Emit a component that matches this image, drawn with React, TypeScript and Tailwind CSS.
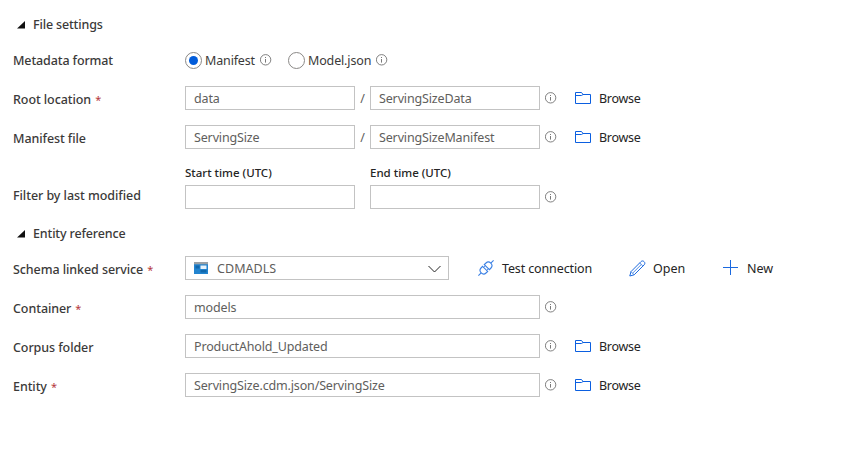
import type { ReactNode } from "react";

function Info({ className = "" }: { className?: string }) {
  return (
    <svg viewBox="0 0 12 12" className={`h-3 w-3 shrink-0 ${className}`} fill="none" stroke="#6a6a6a">
      <circle cx="5.6" cy="5.8" r="5.2" strokeWidth="0.85" />
      <path d="M5.5 5v3.6M5.5 3v1" strokeWidth="0.9" />
    </svg>
  );
}

function Folder() {
  return (
    <svg viewBox="0 0 17 13" className="h-[13px] w-[17px] shrink-0" fill="none" stroke="#0b5fe0" strokeWidth="1">
      <path d="M.5 11.5V.5H6.5L8 2.5H15.5V11.5Z" />
      <path d="M.5 3.5H6.5L8 2.5" />
    </svg>
  );
}

function Plug() {
  return (
    <svg viewBox="0 0 16 16" className="h-4 w-4 shrink-0" fill="none" stroke="#3b80e4" strokeWidth="1.1">
      <path d="M.4 15.6 3.2 12.8M12.8 3.2 15.6.4" />
      <path d="M4.6 6.3 9.7 11.4 8 13C6.5 14.4 4.7 14.3 3.2 12.8 1.7 11.3 1.6 9.5 3 8Z" />
      <path d="M6.3 4.6 11.4 9.7 13 8C14.4 6.5 14.3 4.7 12.8 3.2 11.3 1.7 9.5 1.6 8 3Z" />
      <path d="M5.5 7.4 7.4 5.5M8.6 10.5 10.5 8.6" strokeWidth="0.9" />
    </svg>
  );
}

function Pencil() {
  return (
    <svg viewBox="0 0 17 17" className="h-[17px] w-[17px] shrink-0" fill="none" stroke="#1b69df" strokeWidth="1">
      <path d="M.8 16 2 11.6 11.9 1.7C12.9.7 14.2.7 15.1 1.7 16.1 2.6 16.1 3.9 15.1 4.9L5.2 14.8Z" />
      <path d="M2 11.6 5.2 14.8M10.7 2.9 13.9 6.1M3.6 13.2 12.3 4.5" strokeWidth="0.75" />
    </svg>
  );
}

function Plus() {
  return (
    <svg viewBox="0 0 16 16" className="h-4 w-4 shrink-0" fill="none" stroke="#1b69df" strokeWidth="1">
      <path d="M0 7.5h15M7.5 0v15" />
    </svg>
  );
}

function Label({ children, required }: { children: ReactNode; required?: boolean }) {
  return (
    <div className="mt-0.5 flex h-6 w-[172px] shrink-0 items-center gap-1 font-medium text-[#3b3a39]">
      <span className="tracking-[-0.08px]">{children}</span>
      {required && <span className="text-[11px] font-normal text-[#b5383d]">*</span>}
    </div>
  );
}

function Field({ value = "", wide }: { value?: string; wide?: boolean }) {
  return (
    <div className={`flex h-6 shrink-0 items-center border border-[#c3c3c3] pt-px pl-2 text-[#605e5c] ${wide ? "w-[355px]" : "w-[170px]"}`}>
      <span className="tracking-[-0.15px]">{value}</span>
    </div>
  );
}

function Slash() {
  return <div className="h-6 w-[15px] shrink-0 pt-px text-center leading-6 text-[#605e5c]">/</div>;
}

function Browse() {
  return (
    <div className="ml-[18px] flex h-6 items-center gap-[7px] text-[#242424]">
      <Folder />
      <span className="mt-px tracking-[-0.3px]">Browse</span>
    </div>
  );
}

function Row({ children }: { children: ReactNode }) {
  return <div className="flex h-[39px] items-start">{children}</div>;
}

function Section({ children, className }: { children: string; className: string }) {
  return (
    <div className={`flex items-center pl-1 font-medium text-[#3b3a39] ${className}`}>
      <svg viewBox="0 0 8 8" className="mr-2 h-2 w-2" fill="#111">
        <path d="M8 0V7.5H0Z" />
      </svg>
      <span className="tracking-[-0.15px]">{children}</span>
    </div>
  );
}

export default function App() {
  return (
    <main className="h-[454px] w-[849px] overflow-hidden bg-white pt-[15px] pl-[13px] font-['Noto_Sans',sans-serif] text-[12.5px] leading-5 whitespace-nowrap">
      <Section className="h-5">File settings</Section>
      <div className="flex h-[51px] items-center">
        <div className="w-[172px] font-medium text-[#3b3a39]">
          <span className="tracking-[-0.12px]">Metadata format</span>
        </div>
        <div className="flex w-[103px] items-center">
          <span className="-mt-px mr-[3px] flex h-[17px] w-[17px] items-center justify-center rounded-full border border-[#8a8886]">
            <span className="h-[9px] w-[9px] rounded-full bg-[#015cda]" />
          </span>
          <span className="w-[55px] tracking-[-0.15px] text-[#3b3a39]">Manifest</span>
          <Info className="-mt-0.5" />
        </div>
        <div className="flex items-center">
          <span className="-mt-px mr-[3px] h-[17px] w-[17px] rounded-full border border-[#8a8886]" />
          <span className="w-[68px] tracking-[-0.15px] text-[#3b3a39]">Model.json</span>
          <Info className="-mt-0.5" />
        </div>
      </div>
      <Row>
        <Label required>Root location</Label>
        <Field value="data" />
        <Slash />
        <Field value="ServingSizeData" />
        <Info className="mt-1.5 ml-[5px]" />
        <Browse />
      </Row>
      <Row>
        <Label>Manifest file</Label>
        <Field value="ServingSize" />
        <Slash />
        <Field value="ServingSizeManifest" />
        <Info className="mt-1.5 ml-[5px]" />
        <Browse />
      </Row>
      <div className="flex h-[45px] items-end">
        <div className="mb-[3px] w-[172px] font-medium tracking-[-0.06px] text-[#3b3a39]">Filter by last modified</div>
        <div className="mr-[15px] flex flex-col">
          <span className="h-[21px] text-[11.5px] font-medium leading-[18px] text-[#242424]">Start time (UTC)</span>
          <Field />
        </div>
        <div className="flex flex-col">
          <span className="h-[21px] text-[11.5px] font-medium leading-[18px] text-[#242424]">End time (UTC)</span>
          <Field />
        </div>
        <Info className="mb-1.5 ml-[5px]" />
      </div>
      <Section className="h-[47px] pt-[2px]">Entity reference</Section>
      <Row>
        <Label required>Schema linked service</Label>
        <div className="flex h-6 w-[264px] shrink-0 items-center border border-[#c3c3c3] pr-[7px] pl-2 text-[#605e5c]">
          <svg viewBox="0 0 14 12" className="mr-[9px] h-3 w-3.5">
            <path d="M0 0H14V12H0Z" fill="#2384cf" />
            <path d="M0 0H14V2.3H0Z" fill="#9aa0a5" />
            <path d="M1.5 3.5H5.5V6.5H1.5Z" fill="#1068ad" />
            <path d="M6.5 3.5H12.5V7H6.5Z" fill="#e8f3fb" />
            <path d="M6.5 8H12.5V10.5H6.5Z" fill="#1068ad" />
          </svg>
          <span className="flex-1 pt-0.5 tracking-[0.05px]">CDMADLS</span>
          <svg viewBox="0 0 13 8" className="mt-px h-2 w-[13px]" fill="none" stroke="#252525" strokeWidth="1">
            <path d="M.5 1 6.5 7 12.5 1" />
          </svg>
        </div>
        <div className="ml-[29px] flex h-6 w-[151px] items-center gap-2 text-[#242424]">
          <Plug />
          <span className="mt-px tracking-[-0.13px]">Test connection</span>
        </div>
        <div className="flex h-6 w-[94px] items-center gap-[7px] text-[#242424]">
          <Pencil />
          <span className="mt-px">Open</span>
        </div>
        <div className="flex h-6 items-center gap-2 text-[#242424]">
          <Plus />
          <span className="mt-px">New</span>
        </div>
      </Row>
      <Row>
        <Label required>Container</Label>
        <Field wide value="models" />
        <Info className="mt-1.5 ml-[5px]" />
      </Row>
      <Row>
        <Label>Corpus folder</Label>
        <Field wide value="ProductAhold_Updated" />
        <Info className="mt-1.5 ml-[5px]" />
        <Browse />
      </Row>
      <Row>
        <Label required>Entity</Label>
        <Field wide value="ServingSize.cdm.json/ServingSize" />
        <Info className="mt-1.5 ml-[5px]" />
        <Browse />
      </Row>
    </main>
  );
}
